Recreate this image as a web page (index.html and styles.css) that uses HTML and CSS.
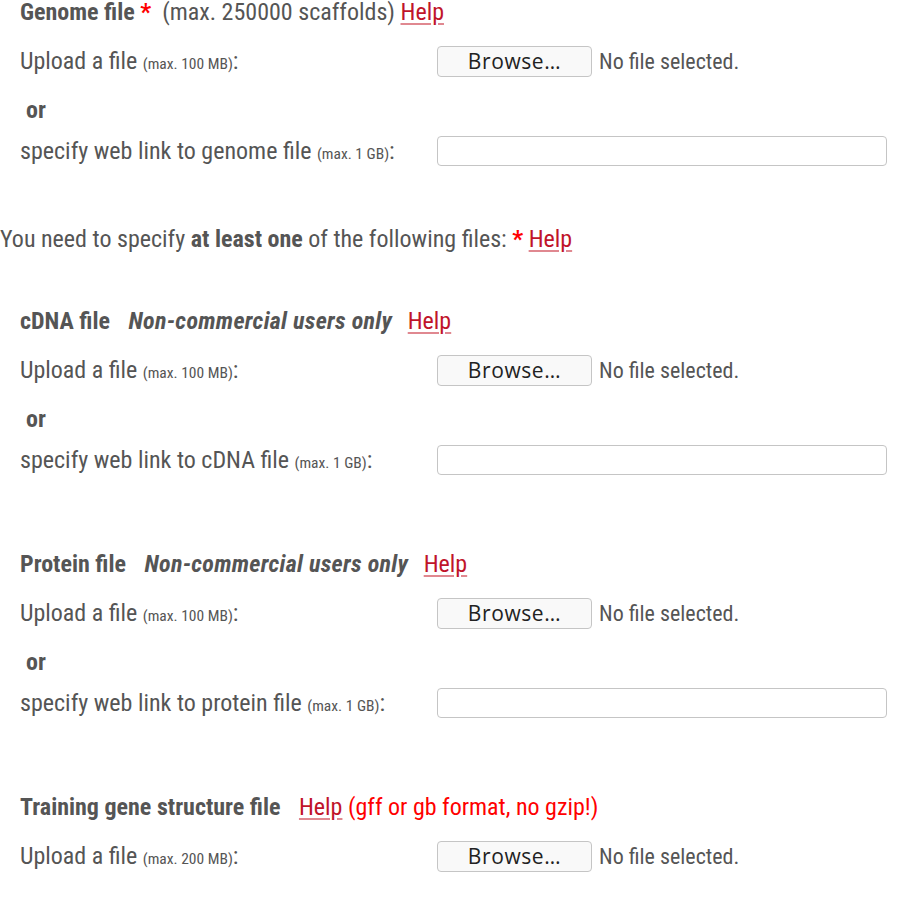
FILE: index.html
```html
<!DOCTYPE html>
<html>
<head>
<meta charset="utf-8">
<link rel="stylesheet" href="styles.css">
</head>
<body>
<div class="page">
  <section class="group first">
    <div class="title"><b class="plain">Genome file</b> <span class="req">*</span>&nbsp; (max. 250000 scaffolds) <a class="help" href="#">Help</a></div>
    <div class="row">
      <span class="label">Upload a file <small>(max. 100 MB)</small>:</span>
      <span class="file"><span class="btn">Browse…</span><span class="nofile">No file selected.</span></span>
    </div>
    <div class="or">or</div>
    <div class="row link">
      <span class="label">specify web link to genome file <small>(max. 1 GB)</small>:</span>
      <span class="input"></span>
    </div>
  </section>

  <p class="note">You need to specify <b>at least one</b> of the following files: <span class="req">*</span> <a class="help" href="#">Help</a></p>

  <section class="group after-note">
    <div class="title"><b>cDNA file</b> <i>Non-commercial users only</i> <a class="help" href="#">Help</a></div>
    <div class="row">
      <span class="label">Upload a file <small>(max. 100 MB)</small>:</span>
      <span class="file"><span class="btn">Browse…</span><span class="nofile">No file selected.</span></span>
    </div>
    <div class="or">or</div>
    <div class="row link">
      <span class="label">specify web link to cDNA file <small>(max. 1 GB)</small>:</span>
      <span class="input"></span>
    </div>
  </section>

  <section class="group">
    <div class="title"><b>Protein file</b> <i>Non-commercial users only</i> <a class="help" href="#">Help</a></div>
    <div class="row">
      <span class="label">Upload a file <small>(max. 100 MB)</small>:</span>
      <span class="file"><span class="btn">Browse…</span><span class="nofile">No file selected.</span></span>
    </div>
    <div class="or">or</div>
    <div class="row link">
      <span class="label">specify web link to protein file <small>(max. 1 GB)</small>:</span>
      <span class="input"></span>
    </div>
  </section>

  <section class="group">
    <div class="title"><b>Training gene structure file</b> <a class="help" href="#">Help</a><span class="warn"> (gff or gb format, no gzip!)</span></div>
    <div class="row">
      <span class="label">Upload a file <small>(max. 200 MB)</small>:</span>
      <span class="file"><span class="btn">Browse…</span><span class="nofile">No file selected.</span></span>
    </div>
  </section>
</div>
</body>
</html>
```

FILE: styles.css
```css
html, body {
  margin: 0;
  padding: 0;
  background: #fff;
}
body {
  font-family: "Roboto", "Liberation Sans", sans-serif;
  font-stretch: 75%;
  font-size: 24px;
  color: #555;
}
.page {
  width: 904px;
  height: 909px;
  overflow: hidden;
}
.group {
  padding-left: 20px;
  margin-top: 77px;
}
.group.first {
  margin-top: 0;
}
.group.after-note {
  margin-top: 58px;
}
.title {
  height: 24px;
  line-height: 24px;
  white-space: nowrap;
}
.title b {
  font-weight: 700;
  margin-right: 13px;
}
.title b.plain {
  margin-right: 0;
}
.title i {
  font-weight: 700;
  letter-spacing: 0.3px;
  margin-right: 10px;
}
.req {
  color: #f00;
  font-weight: 700;
}
.help {
  color: #c0142a;
  text-decoration: underline;
  text-decoration-color: #e08890;
  text-underline-offset: 3px;
}
.warn {
  color: #f00;
}
.row {
  display: flex;
  align-items: center;
  height: 30px;
  margin-top: 22px;
}
.row.link {
  margin-top: 14px;
}
.label {
  width: 417px;
  flex: none;
  white-space: nowrap;
}
small {
  font-size: 15.5px;
}
.file {
  display: flex;
  align-items: center;
}
.btn {
  box-sizing: border-box;
  width: 155px;
  height: 31px;
  border: 1px solid #c5c5c5;
  border-radius: 4px;
  background: #f9f9f9;
  font-family: "Open Sans", "DejaVu Sans", sans-serif;
  font-stretch: 100%;
  font-size: 21px;
  letter-spacing: 0.6px;
  color: #222;
  display: flex;
  align-items: center;
  justify-content: center;
}
.nofile {
  margin-left: 7px;
  font-size: 22px;
}
.input {
  box-sizing: border-box;
  width: 450px;
  height: 30px;
  border: 1px solid #c5c5c5;
  border-radius: 4px;
  background: #fff;
}
.or {
  font-weight: 700;
  padding-left: 6px;
  height: 24px;
  line-height: 24px;
  margin-top: 22px;
}
.note {
  margin: 61px 0 0 0;
  height: 24px;
  line-height: 24px;
}
```
